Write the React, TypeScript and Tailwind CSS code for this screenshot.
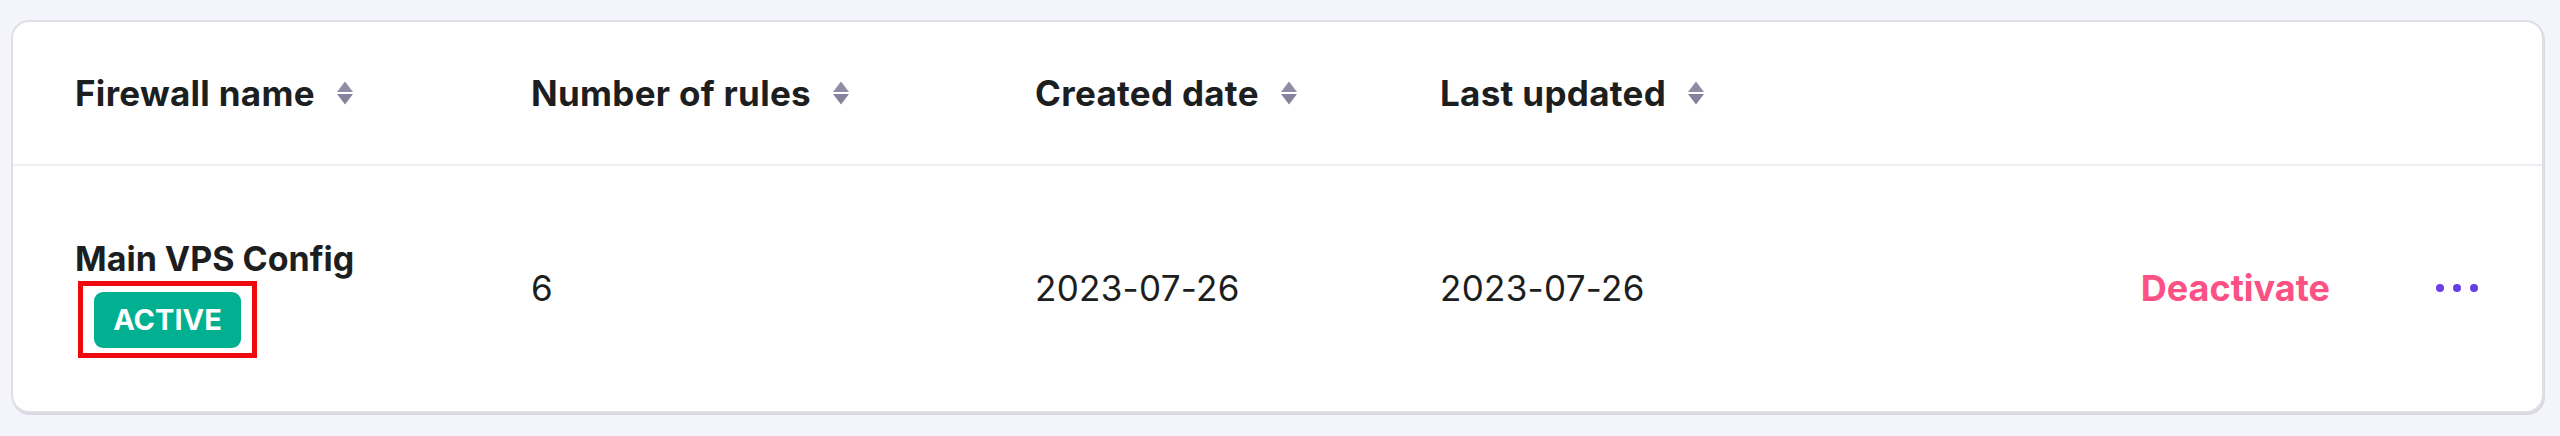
import React from "react";

const SortIcon = () => (
  <svg width="18" height="26" viewBox="0 0 18 26" className="shrink-0">
    <path d="M9 1.5 L17 12 H1 Z" fill="#8f8ca6" />
    <path d="M9 24.5 L17 14 H1 Z" fill="#85829c" />
  </svg>
);

const HeaderCell = ({ label }: { label: string }) => (
  <div className="flex items-center gap-[21px]">
    <span className="font-bold">{label}</span>
    <SortIcon />
  </div>
);

export default function App() {
  return (
    <div
      className="w-[2560px] h-[436px] bg-[#f4f4fd] pt-[20px] pl-[11px] pr-[16px] text-[#1d1e20]"
      style={{ fontFamily: "Inter, 'Noto Sans', sans-serif" }}
    >
      <div className="w-[2533px] h-[393px] bg-white rounded-[18px] border-2 border-[#dedee4] shadow-[1px_2px_0_#d8d8de] overflow-hidden">
        {/* header */}
        <div className="h-[144px] grid grid-cols-[456px_504px_405px_1fr] pl-[62px] items-center text-[35px] tracking-[0.3px] border-b-2 border-[#eeeef2]">
          <HeaderCell label="Firewall name" />
          <HeaderCell label="Number of rules" />
          <HeaderCell label="Created date" />
          <HeaderCell label="Last updated" />
        </div>
        {/* row */}
        <div className="h-[246px] grid grid-cols-[456px_504px_405px_1fr_auto_auto] items-start pl-[62px] pr-[64px] text-[35px] tracking-[0.3px]">
          <div className="pt-[76px] flex flex-col items-start">
            <span className="font-bold text-[34px] leading-[34px] tracking-normal">Main VPS Config</span>
            <div className="mt-[5px] ml-[3px] border-[5px] border-[#ee0a0a] px-[11px] pt-[6px] pb-[5px]">
              <span className="flex items-center justify-center w-[147px] h-[56px] rounded-[9px] bg-[#00b090] text-white font-bold text-[29px] tracking-normal">
                ACTIVE
              </span>
            </div>
          </div>
          <span className="pt-[102px] leading-[40px]">6</span>
          <span className="pt-[102px] leading-[40px]">2023-07-26</span>
          <span className="pt-[102px] leading-[40px]">2023-07-26</span>
          <button className="pt-[102px] leading-[40px] mr-[106px] font-bold text-[36px] tracking-normal text-[#fc5185]">
            Deactivate
          </button>
          <button className="pt-[102px] h-[142px] flex items-center gap-[9px]">
            <span className="w-[8px] h-[8px] rounded-full bg-[#673de6]" />
            <span className="w-[8px] h-[8px] rounded-full bg-[#673de6]" />
            <span className="w-[8px] h-[8px] rounded-full bg-[#673de6]" />
          </button>
        </div>
      </div>
    </div>
  );
}
